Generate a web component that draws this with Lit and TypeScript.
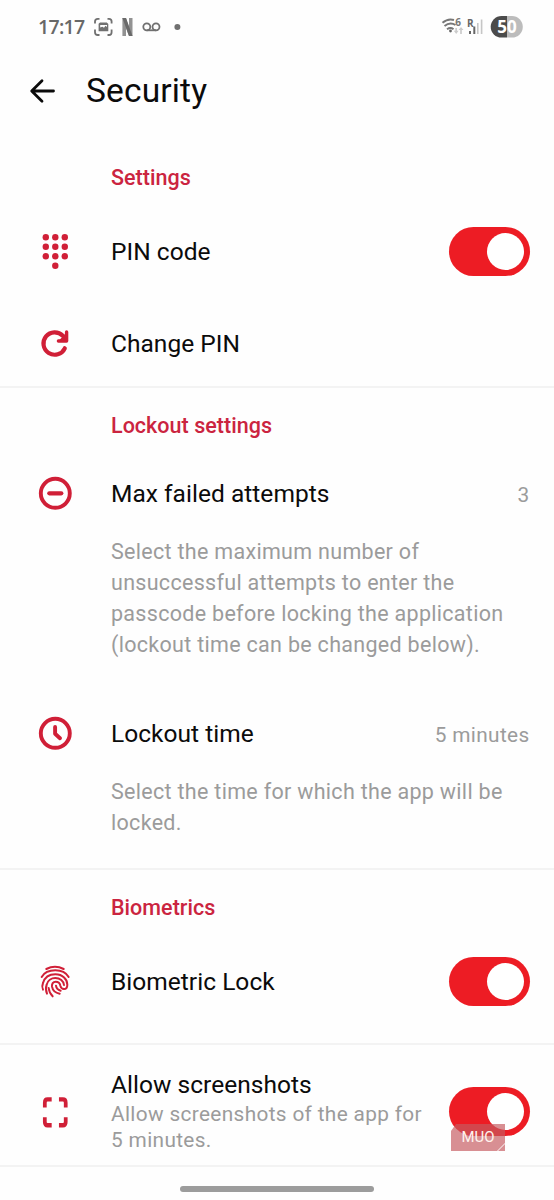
import { LitElement, html, css, svg, nothing } from "lit";
import { customElement, property } from "lit/decorators.js";

const icons: Record<string, unknown> = {
  keypad: svg`${[0, 1, 2].map((r) =>
    [0, 1, 2].map((c) => svg`<circle cx=${10.8 + c * 9.5} cy=${6.3 + r * 9.5} r="3.2" fill="currentColor"/>`)
  )}<circle cx="20.3" cy="34.8" r="3.2" fill="currentColor"/>`,
  refresh: svg`<path d="M29.8 25.3A11.2 11.2 0 1 1 27.8 12.8" fill="none" stroke="currentColor" stroke-width="4.2" stroke-linecap="round"/>
    <path d="M31.6 9V18H23.4" fill="none" stroke="currentColor" stroke-width="3.4" stroke-linecap="round" stroke-linejoin="round"/>
    <path d="M31 10V17.5H24Z" fill="currentColor"/>`,
  minus: svg`<circle cx="20.3" cy="20.3" r="14.5" fill="none" stroke="currentColor" stroke-width="3.9"/>
    <path d="M14.3 20.3H26.3" stroke="currentColor" stroke-width="4.2" stroke-linecap="round"/>`,
  clock: svg`<circle cx="20.3" cy="20.3" r="14.5" fill="none" stroke="currentColor" stroke-width="3.9"/>
    <path d="M20.1 14V20.8L25 25.2" fill="none" stroke="currentColor" stroke-width="3.9" stroke-linecap="round" stroke-linejoin="round"/>`,
  finger: svg`<g transform="translate(-15 -11) scale(.3333)" fill="none" stroke="currentColor" stroke-width="6" stroke-linecap="round">
    <path d="M79 57Q105 43 131 57"/>
    <path d="M65 81C73 67 88 61 106 61C124 61 138 68 146 81"/>
    <path d="M69 119C66 113 66 106 69 99C74 83 88 73 106 73C128 73 142 88 142 104C142 112 138 117 132 117C125 117 122 112 121 107C120 100 114 95 107 95C99 95 95 102 96 110C98 121 107 129 119 131"/>
    <path d="M81 131C77 122 77 113 80 104C83 92 94 84 106 84C120 84 131 93 132 105"/>
    <path d="M98 139C91 132 87 124 86 114"/>
    <path d="M108 107C109 115 114 120 122 122"/>
  </g>`,
  frame: svg`<path d="M10.4 16.4V12.4Q10.4 9.7 13.1 9.7H17M24 9.7H27.8Q30.5 9.7 30.5 12.4V16.4M30.5 24.4V28.2Q30.5 30.9 27.8 30.9H24M17 30.9H13.1Q10.4 30.9 10.4 28.2V24.4" transform="translate(-1 -4.5) scale(1.04 1.22)" fill="none" stroke="currentColor" stroke-width="3.6"/>`,
};

@customElement("toggle-switch")
class ToggleSwitch extends LitElement {
  static styles = css`
    :host { display: block; flex: none; }
    .track { box-sizing: border-box; width: 80.5px; height: 49px; border-radius: 25px; background: #ed1c24; padding: 6px; display: flex; justify-content: flex-end; }
    .knob { width: 37px; height: 37px; border-radius: 50%; background: #fff; }
  `;
  render() {
    return html`<div class="track"><div class="knob"></div></div>`;
  }
}

@customElement("setting-row")
class SettingRow extends LitElement {
  @property() icon = "";
  @property() label = "";
  @property() value = "";
  @property() note = "";
  @property({ type: Boolean }) toggle = false;

  static styles = css`
    :host { display: block; }
    .row { height: 100%; display: flex; align-items: center; padding: 0 24.5px 0 35px; }
    .icon { width: 40px; height: 40px; flex: none; color: #d01f37; display: block; }
    .text { flex: 1; padding-left: 36px; }
    .label { font-size: 24.5px; line-height: 30px; letter-spacing: 0.03px; color: #0b0b0b; white-space: nowrap; padding-top: 2px; }
    .note { font-size: 20.8px; line-height: 26px; letter-spacing: 0.35px; color: #9b9b9b; white-space: pre; padding: 1px 0 3px; }
    .value { font-size: 20.8px; letter-spacing: 0.35px; color: #9b9b9b; padding-top: 3px; }
  `;
  render() {
    return html`<div class="row">
      <svg class="icon" viewBox="0 0 40 40">${icons[this.icon]}</svg>
      <div class="text">
        <div class="label">${this.label}</div>
        ${this.note ? html`<div class="note">${this.note}</div>` : nothing}
      </div>
      ${this.value ? html`<div class="value">${this.value}</div>` : nothing}
      ${this.toggle ? html`<toggle-switch></toggle-switch>` : nothing}
    </div>`;
  }
}

@customElement("app-root")
class AppRoot extends LitElement {
  static styles = css`
    :host { display: block; position: relative; width: 554px; height: 1200px; overflow: hidden; background: #fefefe; font-family: Roboto, sans-serif; color: #0b0b0b; }
    .status { height: 54px; display: flex; justify-content: space-between; padding: 0 31px 0 38px; }
    .group { display: flex; align-items: center; }
    .time { font: 600 19.5px/54px "Open Sans", sans-serif; letter-spacing: -0.7px; color: #686868; width: 54px; }
    .header { height: 73px; display: flex; align-items: center; padding-left: 28px; }
    .header svg { width: 30px; height: 30px; }
    h1 { margin: 0; padding-left: 28px; font-size: 33.5px; font-weight: 400; line-height: 44px; letter-spacing: 0.15px; }
    section { border-bottom: 2px solid #f3f3f3; box-sizing: border-box; }
    h2 { margin: 0; padding-left: 111px; font-size: 21.5px; line-height: 26px; font-weight: 500; color: #cb2440; letter-spacing: 0.03px; }
    .first { height: 261px; padding-top: 38px; }
    .lockout { height: 482px; padding-top: 25px; }
    .bio { height: 175px; padding-top: 25px; }
    .shots { height: 122px; }
    .gap-s { height: 92px; }
    .first h2 { padding-bottom: 14px; }
    .lockout h2 { padding-bottom: 23px; }
    .bio h2 { padding-bottom: 14px; }
    .max { height: 62px; }
    .time-row { height: 62px; padding-top: 42px; }
    .shots-row { height: 120px; padding-top: 13px; box-sizing: border-box; }
    p { margin: 12px 0 0; padding-left: 111px; font-size: 21.5px; line-height: 31px; letter-spacing: 0.3px; color: #9b9b9b; white-space: pre; }
    .home { width: 194px; height: 6px; border-radius: 3px; background: #9c9c9c; margin: 19px auto 0; }
    .mark { position: absolute; left: 451px; top: 1123px; width: 55px; height: 29px; }
  `;
  render() {
    return html`
      <div class="status">
        <div class="group">
          <span class="time">17:17</span>
          <svg width="100" height="30" viewBox="92 12 100 30" fill="none" stroke="#707070" stroke-width="1.8">
            <path d="M95 23.5V21.5Q95 18.8 97.8 18.8H99.5M107.5 18.8H109Q111.6 18.8 111.6 21.5V23.5M111.6 29.5V32.2Q111.6 35 109 35H107.5M99.5 35H97.8Q95 35 95 32.2V29.5"/>
            <path fill-rule="evenodd" d="M100 22.4H106.8L108.3 24V31.2H98.6V23.8ZM100.2 25V27.5L102.4 26.7L104 27.8L105.5 25.8L107 27V25Z" fill="#707070" stroke="none"/>
            <path d="M122.4 18V36H126V28L129 36H132.5V18H129V27L126 18Z" fill="#929292" stroke="none"/><path d="M122.4 18H126L132.5 36H129Z" fill="#696969" stroke="none"/>
            <circle cx="146.8" cy="26.8" r="3.5"/><circle cx="156" cy="26.8" r="3.5"/><path d="M146.8 30.3H156"/>
            <circle cx="177.4" cy="26.9" r="3" fill="#707070" stroke="none"/>
          </svg>
        </div>
        <div class="group">
          <svg width="82" height="30" viewBox="441 12 82 30" fill="none">
            <g stroke="#777" stroke-width="2"><path d="M442.5 22.8Q448 18 454 20M444.5 26Q450 21.6 455.5 25M447 29.2Q450.5 26.8 453.5 29.2"/></g>
            <circle cx="450.5" cy="31" r="1.4" fill="#666"/>
            <text x="455.2" y="26" font-family="Open Sans" font-size="10" font-weight="700" fill="#777">6</text>
            <path d="M456.2 28V32M461 29V34" stroke="#ccc" stroke-width="1.7"/><path d="M453.8 30.8H458.6L456.2 34ZM458.5 30H463.5L461 27Z" fill="#ccc"/>
            <text x="467" y="26.5" font-family="Open Sans" font-size="10" font-weight="700" fill="#666">R</text>
            <path d="M470 31V34M474.3 26.5V34" stroke="#666" stroke-width="2"/><path d="M477.8 23V34M481.6 19.5V34" stroke="#c6c6c6" stroke-width="1.6"/>
            <path d="M507 16H501.5A10.8 10.8 0 0 0 501.5 37.6H507Z" fill="#4b4b4b"/><path d="M507 16H512A10.8 10.8 0 0 1 512 37.6H507Z" fill="#bcbcbc"/>
            <text x="507" y="33" text-anchor="middle" font-family="Open Sans" font-size="17" font-weight="700" fill="#fff">50</text>
          </svg>
        </div>
      </div>
      <div class="header">
        <svg viewBox="0 0 30 30" fill="none" stroke="#0b0b0b" stroke-width="2.8" stroke-linecap="round" stroke-linejoin="round"><path d="M25.5 15H4M14 4.7L3.7 15L14 25.3"/></svg>
        <h1>Security</h1>
      </div>
      <section class="first">
        <h2>Settings</h2>
        <setting-row class="gap-s" icon="keypad" label="PIN code" toggle></setting-row>
        <setting-row class="gap-s" icon="refresh" label="Change PIN"></setting-row>
      </section>
      <section class="lockout">
        <h2>Lockout settings</h2>
        <setting-row class="max" icon="minus" label="Max failed attempts" value="3"></setting-row>
        <p>${"Select the maximum number of\nunsuccessful attempts to enter the\npasscode before locking the application\n(lockout time can be changed below)."}</p>
        <setting-row class="time-row" icon="clock" label="Lockout time" value="5 minutes"></setting-row>
        <p>${"Select the time for which the app will be\nlocked."}</p>
      </section>
      <section class="bio">
        <h2>Biometrics</h2>
        <setting-row class="gap-s" icon="finger" label="Biometric Lock" toggle></setting-row>
      </section>
      <section class="shots">
        <setting-row class="shots-row" icon="frame" label="Allow screenshots" note=${"Allow screenshots of the app for\n5 minutes."} toggle></setting-row>
      </section>
      <div class="home"></div>
      <svg class="mark" viewBox="0 0 55 29">
        <path d="M5 1H54V20L46 28H0V8Z" fill="#c65a60" fill-opacity=".68"/>
        <path d="M54 21V28H47Z" fill="#c65a60" fill-opacity=".68"/>
        <text x="10.5" y="18.6" textLength="33" lengthAdjust="spacingAndGlyphs" font-family="Roboto" font-size="14.5" fill="#fff3ee">MUO</text>
      </svg>
    `;
  }
}
